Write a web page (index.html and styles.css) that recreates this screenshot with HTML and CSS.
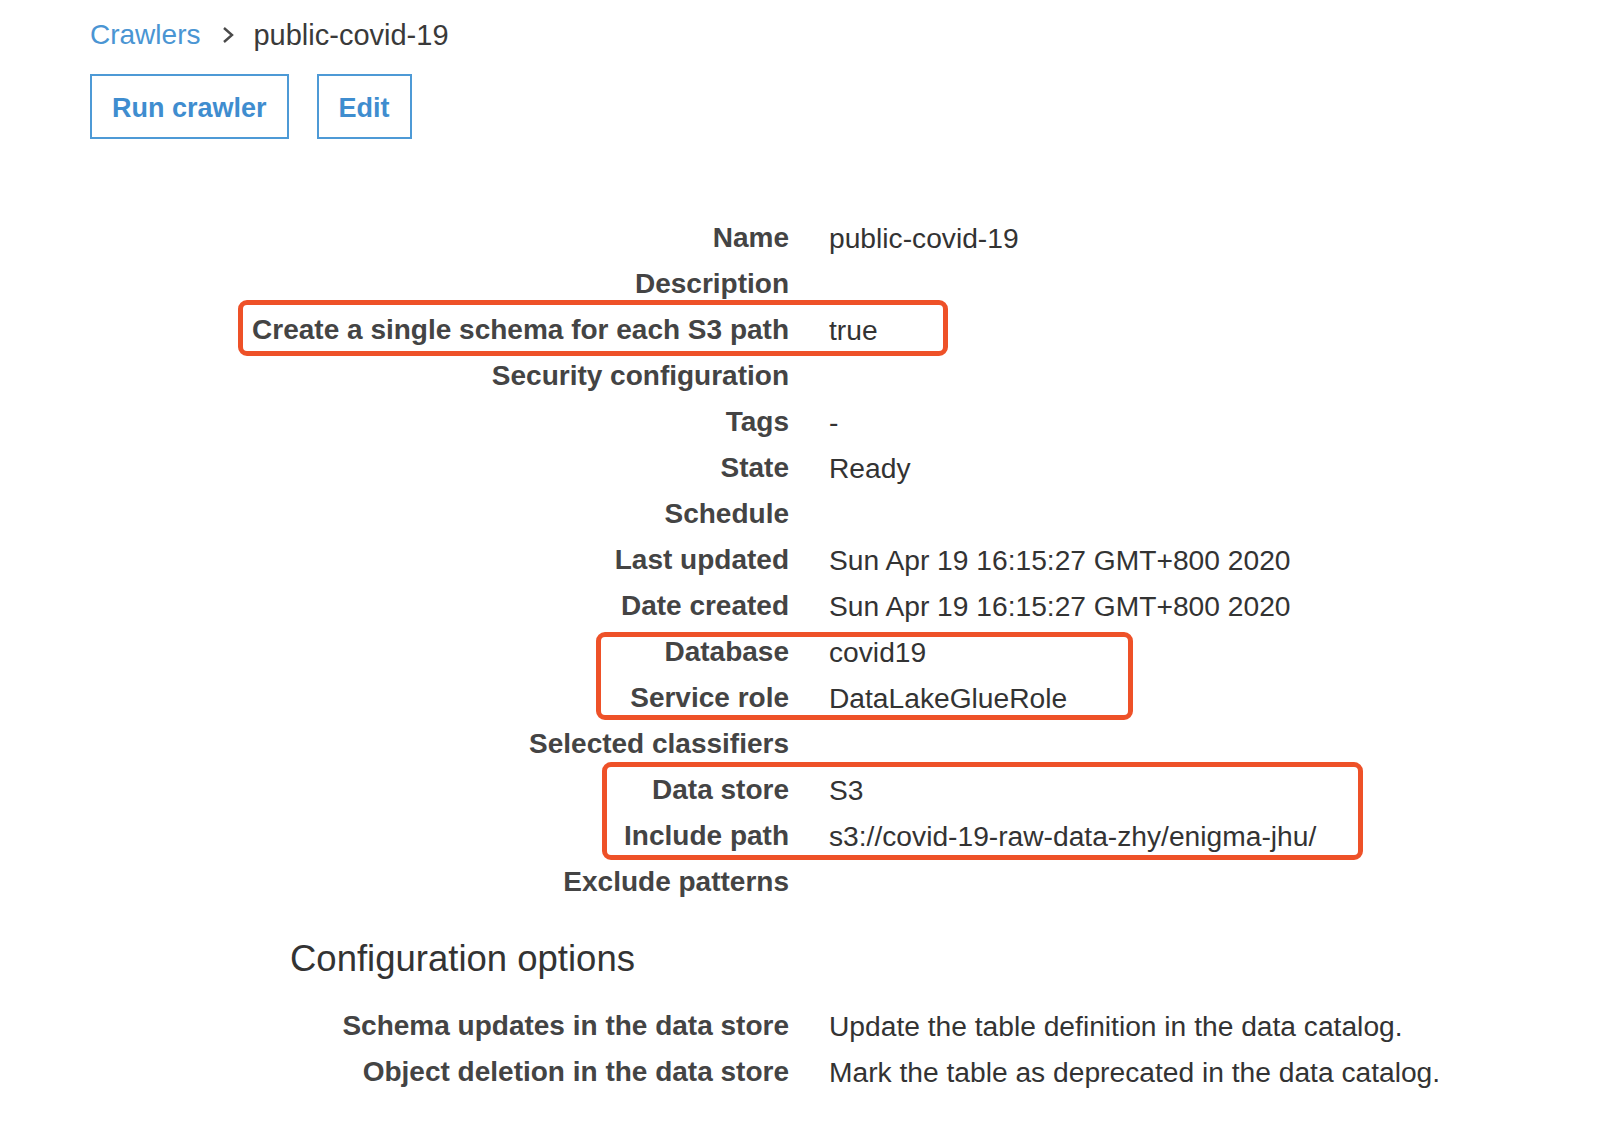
FILE: index.html
```html
<!DOCTYPE html>
<html lang="en">
<head>
<meta charset="utf-8">
<title>public-covid-19</title>
<link rel="stylesheet" href="styles.css">
</head>
<body>
<div class="page">
  <nav class="breadcrumb">
    <a class="crumb-link" href="#">Crawlers</a>
    <svg class="chev" width="12" height="18" viewBox="0 0 12 18"><polyline points="2,2 10,9 2,16" fill="none" stroke="#4a4a4a" stroke-width="2.4"/></svg>
    <span class="crumb-current">public-covid-19</span>
  </nav>
  <div class="actions">
    <button class="btn">Run crawler</button>
    <button class="btn">Edit</button>
  </div>

  <dl class="details">
    <dt>Name</dt><dd>public-covid-19</dd>
    <dt>Description</dt><dd></dd>
    <dt>Create a single schema for each S3 path</dt><dd>true</dd>
    <dt>Security configuration</dt><dd></dd>
    <dt>Tags</dt><dd>-</dd>
    <dt>State</dt><dd>Ready</dd>
    <dt>Schedule</dt><dd></dd>
    <dt>Last updated</dt><dd>Sun Apr 19 16:15:27 GMT+800 2020</dd>
    <dt>Date created</dt><dd>Sun Apr 19 16:15:27 GMT+800 2020</dd>
    <dt>Database</dt><dd>covid19</dd>
    <dt>Service role</dt><dd>DataLakeGlueRole</dd>
    <dt>Selected classifiers</dt><dd></dd>
    <dt>Data store</dt><dd>S3</dd>
    <dt>Include path</dt><dd>s3://covid-19-raw-data-zhy/enigma-jhu/</dd>
    <dt>Exclude patterns</dt><dd></dd>
  </dl>

  <h2 class="section-title">Configuration options</h2>

  <dl class="details config">
    <dt>Schema updates in the data store</dt><dd>Update the table definition in the data catalog.</dd>
    <dt>Object deletion in the data store</dt><dd>Mark the table as deprecated in the data catalog.</dd>
  </dl>

  <div class="hl hl-1"></div>
  <div class="hl hl-2"></div>
  <div class="hl hl-3"></div>
</div>
</body>
</html>
```

FILE: styles.css
```css
html, body {
  margin: 0;
  padding: 0;
  background: #ffffff;
}

body {
  font-family: "Liberation Sans", Arial, Helvetica, sans-serif;
  color: #333333;
}

.page {
  position: relative;
  padding: 18px 0 40px 90px;
  min-height: 1068px;
}

.breadcrumb {
  display: flex;
  align-items: center;
  height: 34px;
  font-size: 28px;
  line-height: 34px;
}

.crumb-link {
  color: #4a95d3;
  text-decoration: none;
}

.chev {
  margin-left: 22px;
  margin-right: 19px;
}

.crumb-current {
  color: #3a3a3a;
  font-size: 29px;
}

.actions {
  display: flex;
  gap: 28px;
  margin-top: 22px;
}

.btn {
  box-sizing: border-box;
  height: 65px;
  padding: 3px 20px 0 20px;
  background: #ffffff;
  border: 2px solid #4d9ad6;
  border-radius: 0;
  color: #3f8dcf;
  font-family: "Liberation Sans", Arial, Helvetica, sans-serif;
  font-weight: bold;
  font-size: 27px;
  cursor: pointer;
}

.details {
  display: grid;
  grid-template-columns: 699px 1fr;
  column-gap: 40px;
  margin: 76px 0 0 0;
  font-size: 28px;
  line-height: 46px;
}

.details dt {
  text-align: right;
  font-weight: bold;
  color: #444444;
  white-space: nowrap;
}

.details dd {
  margin: 0;
  color: #333333;
  white-space: nowrap;
  min-height: 46px;
  font-size: 28.2px;
}

.section-title {
  margin: 33px 0 0 200px;
  font-size: 36.5px;
  line-height: 42px;
  font-weight: normal;
  color: #333333;
}

.details.config {
  margin-top: 23px;
}

.hl {
  position: absolute;
  box-sizing: border-box;
  border: 5px solid #ee5128;
  border-radius: 9px;
}

.hl-1 {
  left: 238px;
  top: 300px;
  width: 710px;
  height: 56px;
}

.hl-2 {
  left: 596px;
  top: 632px;
  width: 537px;
  height: 88px;
}

.hl-3 {
  left: 602px;
  top: 762px;
  width: 761px;
  height: 98px;
}
```
